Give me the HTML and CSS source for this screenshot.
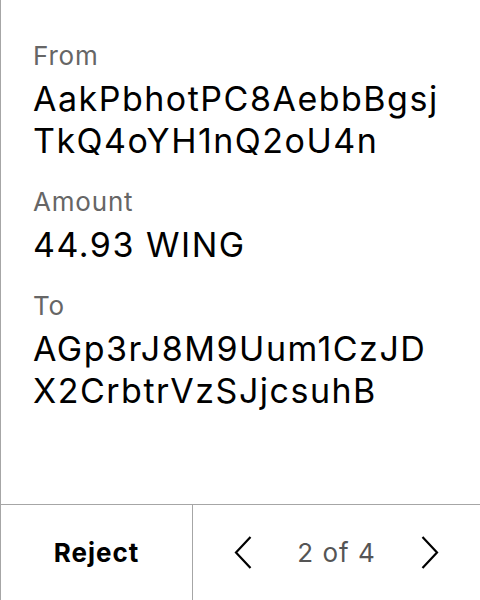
FILE: index.html
```html
<!DOCTYPE html>
<html>
<head>
<meta charset="utf-8">
<link rel="stylesheet" href="styles.css">
</head>
<body>
<div class="screen">
  <div class="details">
    <div class="field">
      <div class="label">From</div>
      <div class="value">AakPbhotPC8AebbBgsj<br>TkQ4oYH1nQ2oU4n</div>
    </div>
    <div class="field">
      <div class="label">Amount</div>
      <div class="value">44.93 WING</div>
    </div>
    <div class="field">
      <div class="label">To</div>
      <div class="value">AGp3rJ8M9Uum1CzJD<br>X2CrbtrVzSJjcsuhB</div>
    </div>
  </div>
  <div class="footer">
    <div class="reject">Reject</div>
    <div class="pager">
      <svg class="chev" width="18" height="33" viewBox="0 0 18 33"><polyline points="16.5,1 2,16.5 16.5,32" fill="none" stroke="#000" stroke-width="2.2"/></svg>
      <span class="count">2 of 4</span>
      <svg class="chev" width="18" height="33" viewBox="0 0 18 33"><polyline points="1.5,1 16,16.5 1.5,32" fill="none" stroke="#000" stroke-width="2.2"/></svg>
    </div>
  </div>
</div>
</body>
</html>
```
FILE: styles.css
```css
* { box-sizing: border-box; }
html, body { margin: 0; padding: 0; background: #fff; }
body { font-family: Inter, "Noto Sans", sans-serif; color: #000; }
.screen {
  width: 480px;
  height: 600px;
  border-left: 1px solid #a6a6a6;
  display: flex;
  flex-direction: column;
}
.details {
  flex: 1;
  padding: 40px 0 0 32px;
  display: flex;
  flex-direction: column;
  gap: 24px;
}
.label {
  font-size: 26px;
  line-height: 32px;
  letter-spacing: 0.8px;
  color: #666;
  margin-bottom: 6px;
}
.value {
  font-size: 34px;
  line-height: 42px;
  letter-spacing: 1.5px;
  color: #000;
}
.footer {
  height: 96px;
  border-top: 1px solid #a6a6a6;
  display: flex;
}
.reject {
  width: 192px;
  border-right: 1px solid #a6a6a6;
  display: flex;
  align-items: center;
  justify-content: center;
  font-size: 26px;
  font-weight: 700;
  letter-spacing: 1px;
}
.pager {
  flex: 1;
  display: flex;
  align-items: center;
  justify-content: space-between;
  padding: 0 41px 0 41px;
}
.count {
  font-size: 26px;
  letter-spacing: 1px;
  color: #555;
}
.chev { display: block; }
```
